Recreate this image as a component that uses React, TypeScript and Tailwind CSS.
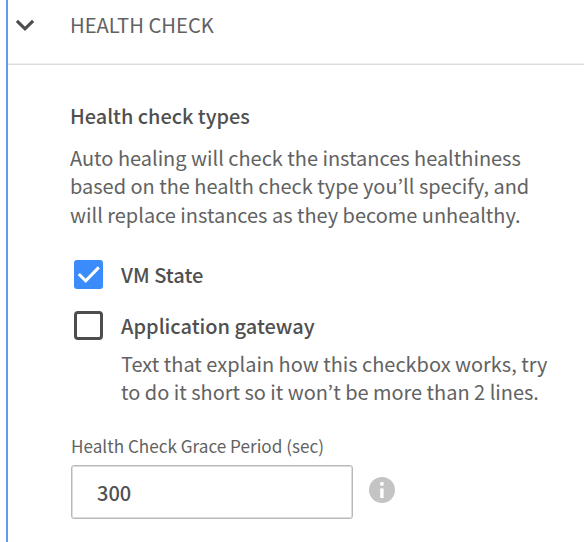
import { useState } from "react";

function Chevron() {
  return (
    <svg width="20" height="14" viewBox="0 0 20 14" fill="none" className="shrink-0">
      <path d="M1.9 2.8 L10 10.8 L18.1 2.8" stroke="#4d4d4d" strokeWidth="3.2" />
    </svg>
  );
}

function CheckBox({ checked, onChange }: { checked: boolean; onChange: () => void }) {
  return (
    <button
      type="button"
      role="checkbox"
      aria-checked={checked}
      onClick={onChange}
      className={
        checked
          ? "h-[29px] w-[29px] shrink-0 rounded-[3px] bg-[#3b8cfa]"
          : "h-[29px] w-[29px] shrink-0 rounded-[4px] border-3 border-[#4d4d4d] bg-white"
      }
    >
      {checked && (
        <svg width="29" height="29" viewBox="0 0 29 29" fill="none">
          <path d="M4.8 14 L11.7 20.8 L24.8 7.4" stroke="#fff" strokeWidth="3" />
        </svg>
      )}
    </button>
  );
}

export default function App() {
  const [vm, setVm] = useState(true);
  const [gateway, setGateway] = useState(false);
  return (
    <div className="h-[542px] w-[584px] overflow-hidden bg-white pl-[6px] font-['Noto_Sans_CJK_KR','Noto_Sans',sans-serif] text-[#626262]">
      <div className="h-full border-l-2 border-[#5a9cf0]">
        <header className="flex h-[65px] items-start border-b border-[#dcdcdc] pl-[7px] shadow-[inset_0_-1px_0_#f0f0f0]">
          <div className="mt-[18px] flex w-[55px]">
            <Chevron />
          </div>
          <h2 className="mt-[10px] text-[20.2px] leading-[29px] whitespace-nowrap">HEALTH CHECK</h2>
        </header>
        <main className="pt-[36px] pl-[62px]">
          <h3 className="text-[19.9px] leading-[29px] font-medium text-[#505050]">Health check types</h3>
          <p className="mt-[13.5px] text-[19.97px] leading-[28.75px] whitespace-nowrap">
            <span className="block">Auto healing will check the instances healthiness</span>
            <span className="block">based on the health check type you’ll specify, and</span>
            <span className="block">will replace instances as they become unhealthy.</span>
          </p>
          <div className="mt-[30.25px] ml-[4px] flex items-start gap-[18px]">
            <CheckBox checked={vm} onChange={() => setVm(!vm)} />
            <span className="text-[20.1px] leading-[29px] font-medium text-[#505050]">VM State</span>
          </div>
          <div className="mt-[22px] ml-[4px] flex items-start gap-[18px]">
            <CheckBox checked={gateway} onChange={() => setGateway(!gateway)} />
            <div className="whitespace-nowrap">
              <div className="text-[20px] leading-[29px] font-medium text-[#505050]">Application gateway</div>
              <p className="mt-[9.5px] text-[19.95px] leading-[28.5px]">
                <span className="block">Text that explain how this checkbox works, try</span>
                <span className="block">to do it short so it won’t be more than 2 lines.</span>
              </p>
            </div>
          </div>
          <label htmlFor="grace" className="mt-[26px] ml-px block text-[17.15px] leading-[25px]">
            Health Check Grace Period (sec)
          </label>
          <div className="mt-[7.5px] ml-px flex items-start gap-[16px]">
            <input
              id="grace"
              defaultValue="300"
              className="h-[54px] w-[282px] rounded-[3px] border border-[#b8b8b8] bg-white pl-[25px] text-[20px] font-medium text-[#505050] shadow-[inset_0_0_0_1px_#dedede]"
            />
            <svg width="26" height="26" viewBox="0 0 26 26" className="mt-[12px]">
              <circle cx="13" cy="13" r="13" fill="#c4c4c4" />
              <rect x="11.2" y="5.2" width="3.4" height="3.4" fill="#fff" />
              <rect x="11.2" y="11.4" width="3.4" height="9.6" fill="#fff" />
            </svg>
          </div>
        </main>
      </div>
    </div>
  );
}
